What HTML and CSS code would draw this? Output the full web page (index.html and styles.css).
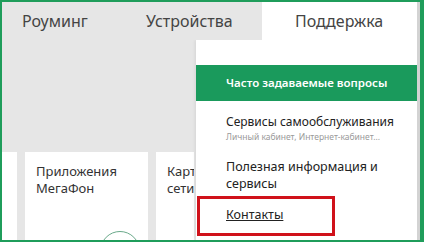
FILE: index.html
```html
<!DOCTYPE html>
<html lang="ru">
<head>
    <meta charset="UTF-8">
    <meta name="viewport" content="width=device-width, initial-scale=1.0">
    <title>МегаФон — Поддержка</title>
    <link rel="stylesheet" href="styles.css">
</head>
<body>
    <div class="frame">
        <div class="screen">
            <div class="tabs">
                <div class="tab tab-roaming">Роуминг</div>
                <div class="tab tab-devices">Устройства</div>
                <div class="tab tab-support">Поддержка</div>
            </div>

            <div class="content">
                <div class="cards">
                    <div class="card card-edge"></div>
                    <div class="card card-apps">
                        <p>Приложения<br>МегаФон</p>
                        <div class="circle"></div>
                    </div>
                    <div class="card card-map">
                        <p>Карта<br>сети</p>
                    </div>
                </div>

                <!-- выпадающее меню поддержки -->
                <div class="dropdown">
                    <div class="menu-item active">Часто задаваемые вопросы</div>
                    <div class="menu-item services">
                        <div class="title">Сервисы самообслуживания</div>
                        <div class="sub">Личный кабинет, Интернет-кабинет...</div>
                    </div>
                    <div class="menu-item useful">Полезная информация и<br>сервисы</div>
                    <div class="menu-item contacts"><a href="#">Контакты</a></div>
                </div>
            </div>
        </div>
    </div>
</body>
</html>
```

FILE: styles.css
```css
body {
    margin: 0;
    font-family: "Noto Sans", "Open Sans", sans-serif;
    background: #ffffff;
}

.frame {
    width: 424px;
    height: 242px;
    box-sizing: border-box;
    border: 2px solid #1f9d5b;
    border-right-width: 4px;
    background: #e6e6e6;
}

.screen {
    height: 100%;
    display: flex;
    flex-direction: column;
    border-right: 3px solid #d3d3d3;
}

.tabs {
    display: flex;
    height: 38px;
    flex-shrink: 0;
}

.tab {
    font-size: 16px;
    line-height: 38px;
    color: #444;
    padding-left: 20px;
    box-sizing: border-box;
}

.tab-roaming {
    width: 124px;
}

.tab-devices {
    width: 136px;
}

.tab-support {
    flex: 1;
    background: #fff;
    padding-left: 33px;
}

.content {
    flex: 1;
    position: relative;
    overflow: hidden;
}

.cards {
    display: flex;
    gap: 8px;
    margin-top: 112px;
    height: 100%;
}

.card {
    background: #fff;
    padding: 11px 11px 0;
    box-sizing: border-box;
}

.card p {
    margin: 0;
    font-size: 13px;
    line-height: 17px;
    color: #333;
}

.card-edge {
    width: 15px;
    padding: 0;
}

.card-apps {
    width: 123px;
}

.card-map {
    width: 38px;
    padding-right: 0;
    overflow: hidden;
    white-space: nowrap;
}

.circle {
    width: 40px;
    height: 40px;
    margin: 34px 0 0 64px;
    border: 1px solid #6aa98a;
    border-radius: 50%;
    box-sizing: border-box;
}

.dropdown {
    position: absolute;
    top: 0;
    left: 194px;
    right: 0;
    bottom: 0;
    background: #fff;
    padding-top: 25px;
    box-shadow: -1px 0 3px rgba(0,0,0,0.08);
}

.menu-item {
    padding-left: 30px;
    font-size: 12.5px;
    line-height: 17px;
    color: #222;
}

.menu-item.active {
    background: #1a9a5c;
    color: #fff;
    font-size: 11.5px;
    font-weight: 600;
    line-height: 36px;
}

.services {
    padding-top: 12px;
}

.services .title {
    font-size: 12px;
    line-height: 17px;
}

.services .sub {
    margin-top: 1px;
    font-size: 8.5px;
    line-height: 12px;
    color: #9a9a9a;
}

.useful {
    margin-top: 15px;
}

.contacts {
    width: 138px;
    box-sizing: border-box;
    margin: 4px 0 0 1px;
    padding: 7px 0 10px 26px;
    border: 3px solid #d0111a;
}

.contacts a {
    color: #222;
    text-decoration: underline;
}
```
